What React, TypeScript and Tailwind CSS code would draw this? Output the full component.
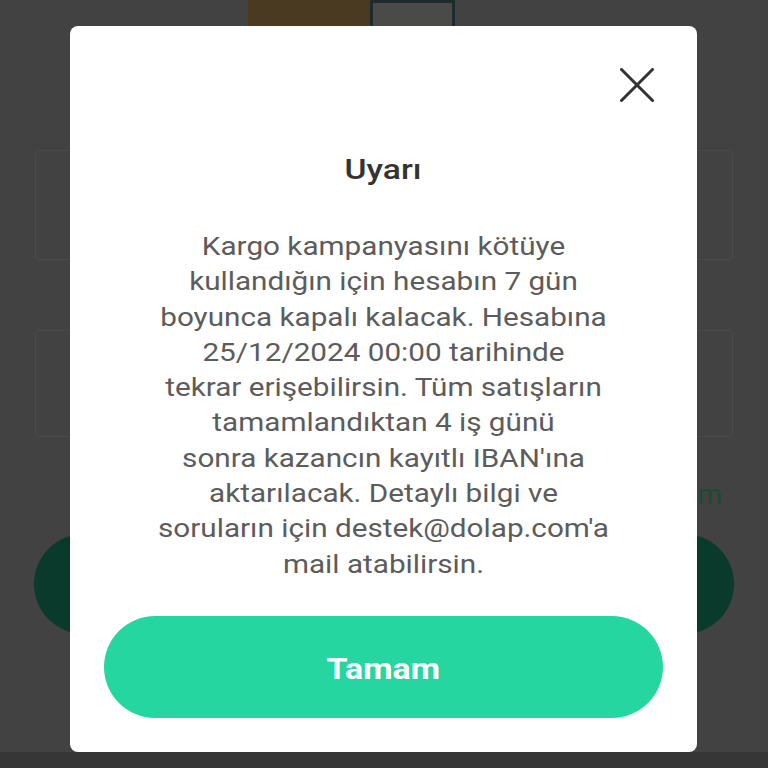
import React from "react";

const lines = [
  "Kargo kampanyasını kötüye",
  "kullandığın için hesabın 7 gün",
  "boyunca kapalı kalacak. Hesabına",
  "25/12/2024 00:00 tarihinde",
  "tekrar erişebilirsin. Tüm satışların",
  "tamamlandıktan 4 iş günü",
  "sonra kazancın kayıtlı IBAN'ına",
  "aktarılacak. Detaylı bilgi ve",
  "soruların için destek@dolap.com'a",
  "mail atabilirsin.",
];

export default function App() {
  return (
    <div
      className="relative w-[768px] h-[768px] overflow-hidden bg-[#424242]"
      style={{ fontFamily: "Roboto, 'Noto Sans', sans-serif" }}
    >
      {/* dimmed page behind */}
      <div className="flex flex-col h-full">
        <div className="flex pl-[248px]">
          <div className="flex w-[207px] h-[60px]">
            <div className="w-[122px] h-full bg-[#4a3a22]" />
            <div className="w-[85px] h-full bg-[#4a4a48] border-[3px] border-[#1f2a2c]" />
          </div>
        </div>
        <div className="flex flex-col px-[35px] pt-[90px] gap-[70px]">
          <div className="h-[110px] rounded-[4px] border border-[#4a4a4a]" />
          <div className="h-[107px] rounded-[4px] border border-[#4a4a4a]" />
        </div>
        <div className="flex justify-end px-[46px] mt-[40px] text-[28px] leading-[36px] text-[#1d4a38]">
          m
        </div>
        <div className="flex gap-[20px] px-[34px] mt-[21px]">
          <div className="flex-1 h-[100px] rounded-full bg-[#0a3a2b]" />
          <div className="flex-1 h-[100px] rounded-full bg-[#0a3a2b]" />
        </div>
        <div className="mt-auto h-[16px] bg-[#363636]" />
      </div>

      {/* modal */}
      <div className="absolute left-[70px] top-[26px] w-[627px] h-[726px] bg-white rounded-[8px] flex flex-col">
        <div className="flex justify-end pt-[42px] pr-[43px]">
          <svg width="34" height="34" viewBox="0 0 34 34">
            <line x1="1.5" y1="1.5" x2="32.5" y2="32.5" stroke="#333" strokeWidth="3" strokeLinecap="round" />
            <line x1="32.5" y1="1.5" x2="1.5" y2="32.5" stroke="#333" strokeWidth="3" strokeLinecap="round" />
          </svg>
        </div>
        <div className="mt-[50px] flex justify-center">
          <div className="text-[28px] leading-[36px] font-medium text-[#333] scale-x-[1.2]">
            Uyarı
          </div>
        </div>
        <div className="mt-[40px] flex flex-col items-center text-[26.5px] leading-[35.3px] text-[#5c5c5c] scale-x-[1.12]">
          {lines.map((l) => (
            <div key={l} className="whitespace-nowrap">
              {l}
            </div>
          ))}
        </div>
        <div className="mt-[35px] mx-[34px] h-[102px] rounded-full bg-[#26d6a0] flex items-center justify-center pt-[3px]">
          <span className="text-white font-bold text-[30px] scale-x-[1.13]">Tamam</span>
        </div>
      </div>
    </div>
  );
}
